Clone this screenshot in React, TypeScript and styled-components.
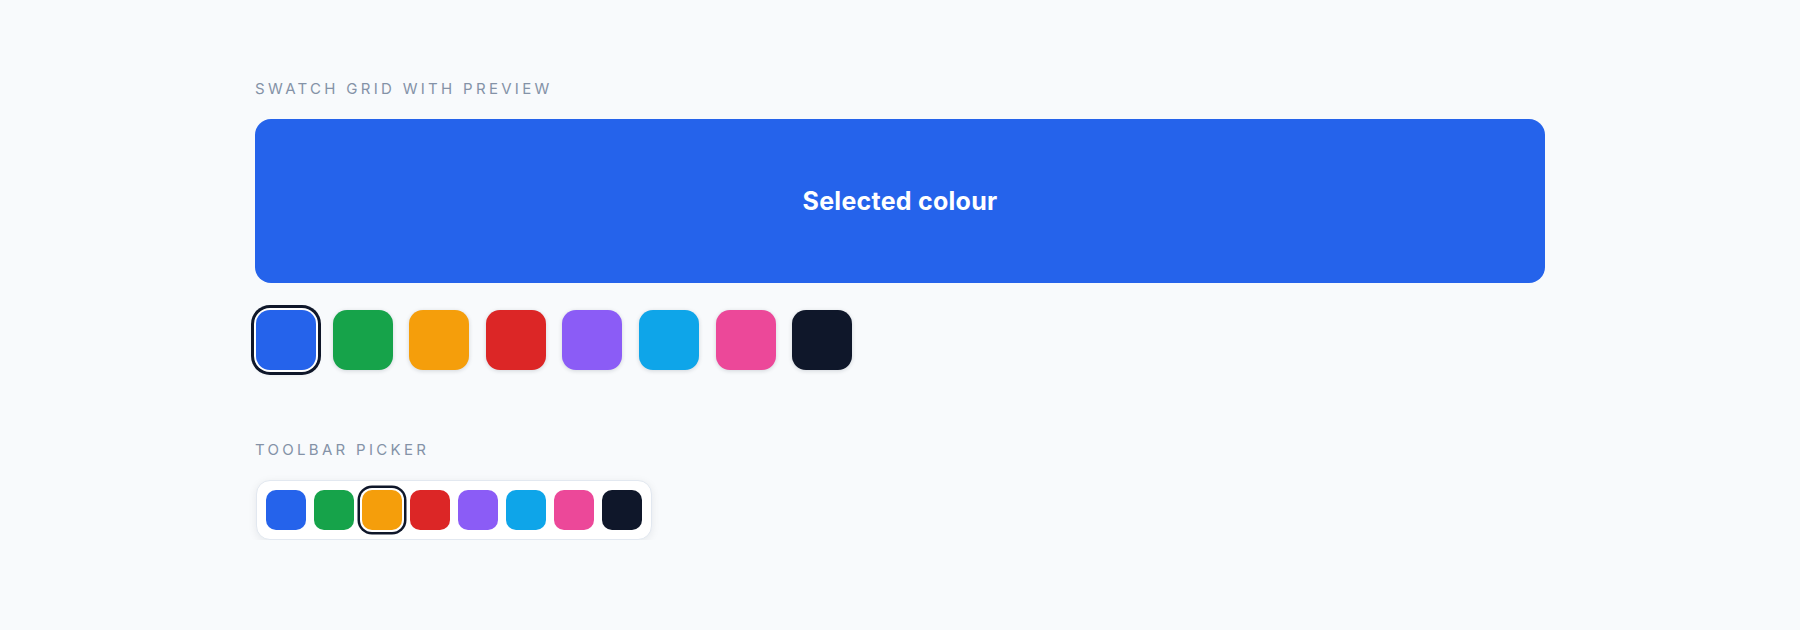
import React from 'react';
import styled, { createGlobalStyle } from 'styled-components';

const COLOURS = ['#2563eb', '#16a34a', '#f59e0b', '#dc2626', '#8b5cf6', '#0ea5e9', '#ec4899', '#0f172a'];

const GlobalStyle = createGlobalStyle`
  html, body {
    margin: 0;
    background: #f8fafc;
    font-family: Inter, "Noto Sans", sans-serif;
  }
`

const Page = styled.main`
  width: 1290px;
  margin: 0 auto;
  padding-top: 81px;
  display: flex;
  flex-direction: column;
`

const Section = styled.section`
  display: flex;
  flex-direction: column;
  & + & {
    margin-top: 72px;
  }
`

const Label = styled.h2`
  margin: 0 0 22px;
  font-size: 15px;
  line-height: 16px;
  font-weight: 400;
  letter-spacing: 3.3px;
  text-transform: uppercase;
  color: #8492a7;
`

const Preview = styled.div<{ $colour: string }>`
  height: 164px;
  border-radius: 16px;
  background: ${p => p.$colour};
  display: flex;
  align-items: center;
  justify-content: center;
  color: #fff;
  font-size: 25px;
  font-weight: 700;
  letter-spacing: 0.01em;
`

const SwatchRow = styled.div`
  display: flex;
  gap: 16.6px;
  margin-top: 27px;
  padding-left: 1px;
`

const Swatch = styled.button<{ $colour: string; $selected: boolean }>`
  width: 60px;
  height: 60px;
  padding: 0;
  border: none;
  border-radius: 14px;
  background: ${p => p.$colour};
  cursor: pointer;
  box-shadow: ${p => p.$selected
    ? '0 0 0 2px #fff, 0 0 0 5px #0f172a, 0 2px 6px rgba(15, 23, 42, 0.2)'
    : '0 1px 4px rgba(15, 23, 42, 0.16)'};
`

const Toolbar = styled.div`
  align-self: flex-start;
  display: flex;
  gap: 8px;
  padding: 9px;
  margin-left: 1px;
  background: #fff;
  border: 1px solid #e2e8f0;
  border-radius: 14px;
  box-shadow: 0 2px 8px rgba(15, 23, 42, 0.08);
`

const ToolSwatch = styled.button<{ $colour: string; $selected: boolean }>`
  width: 40px;
  height: 40px;
  padding: 0;
  border: none;
  border-radius: 10px;
  background: ${p => p.$colour};
  cursor: pointer;
  box-shadow: ${p => p.$selected ? '0 0 0 2px #fff, 0 0 0 4.5px #0f172a' : 'none'};
`

export default function App() {
  const [grid, setGrid] = React.useState(0);
  const [tool, setTool] = React.useState(2);

  return (
    <>
      <GlobalStyle />
      <Page>
        <Section>
          <Label>Swatch grid with preview</Label>
          <Preview $colour={COLOURS[grid]}>Selected colour</Preview>
          <SwatchRow>
            {COLOURS.map((c, i) => (
              <Swatch key={c} $colour={c} $selected={i === grid} onClick={() => setGrid(i)} aria-label={c} />
            ))}
          </SwatchRow>
        </Section>
        <Section>
          <Label>Toolbar picker</Label>
          <Toolbar>
            {COLOURS.map((c, i) => (
              <ToolSwatch key={c} $colour={c} $selected={i === tool} onClick={() => setTool(i)} aria-label={c} />
            ))}
          </Toolbar>
        </Section>
      </Page>
    </>
  );
}
